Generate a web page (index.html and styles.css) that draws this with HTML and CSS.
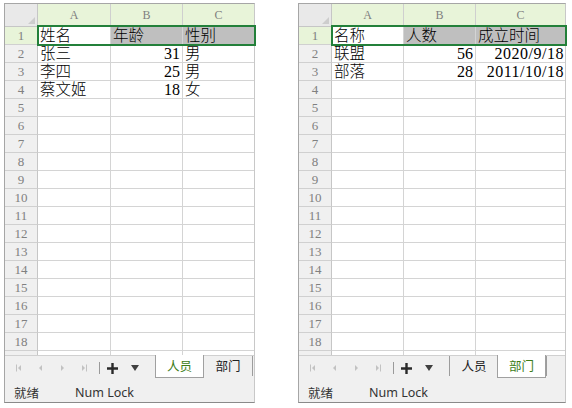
FILE: index.html
```html
<!DOCTYPE html>
<html>
<head>
<meta charset="utf-8">
<link rel="stylesheet" href="styles.css">
</head>
<body>
<div class="desk">
  <div class="win win-l">
    <div class="grid grid-l">
      <div class="corner"><span class="tri"></span></div><div class="ch hl">A</div><div class="ch hl">B</div><div class="ch hl last">C</div>
      <div class="rh hl">1</div><div class="c">姓名</div><div class="c sel">年龄</div><div class="c sel last">性别</div>
      <div class="rh">2</div><div class="c">张三</div><div class="c num">31</div><div class="c last">男</div>
      <div class="rh">3</div><div class="c">李四</div><div class="c num">25</div><div class="c last">男</div>
      <div class="rh">4</div><div class="c">蔡文姬</div><div class="c num">18</div><div class="c last">女</div>
      <div class="rh">5</div><div class="c"></div><div class="c"></div><div class="c last"></div>
      <div class="rh">6</div><div class="c"></div><div class="c"></div><div class="c last"></div>
      <div class="rh">7</div><div class="c"></div><div class="c"></div><div class="c last"></div>
      <div class="rh">8</div><div class="c"></div><div class="c"></div><div class="c last"></div>
      <div class="rh">9</div><div class="c"></div><div class="c"></div><div class="c last"></div>
      <div class="rh">10</div><div class="c"></div><div class="c"></div><div class="c last"></div>
      <div class="rh">11</div><div class="c"></div><div class="c"></div><div class="c last"></div>
      <div class="rh">12</div><div class="c"></div><div class="c"></div><div class="c last"></div>
      <div class="rh">13</div><div class="c"></div><div class="c"></div><div class="c last"></div>
      <div class="rh">14</div><div class="c"></div><div class="c"></div><div class="c last"></div>
      <div class="rh">15</div><div class="c"></div><div class="c"></div><div class="c last"></div>
      <div class="rh">16</div><div class="c"></div><div class="c"></div><div class="c last"></div>
      <div class="rh">17</div><div class="c"></div><div class="c"></div><div class="c last"></div>
      <div class="rh">18</div><div class="c"></div><div class="c"></div><div class="c last"></div>
      <div class="rh fill"></div><div class="c fill"></div><div class="c fill"></div><div class="c fill last"></div>
      <div class="selbox selbox-l"></div>
    </div>
    <div class="tabbar">
      <div class="nav">
        <span class="nb"><svg width="5" height="8" viewBox="0 0 5 8"><rect x="0" y="0.5" width="1" height="7"/><path d="M5 1 L2 4 L5 7Z"/></svg></span>
        <span class="nb"><svg width="3" height="6" viewBox="0 0 3 6"><path d="M3 0 L0 3 L3 6Z"/></svg></span>
        <span class="nb"><svg width="3" height="6" viewBox="0 0 3 6"><path d="M0 0 L3 3 L0 6Z"/></svg></span>
        <span class="nb"><svg width="5" height="8" viewBox="0 0 5 8"><path d="M0 1 L3 4 L0 7Z"/><rect x="4" y="0.5" width="1" height="7"/></svg></span>
        <span class="nsep"></span>
        <span class="nplus"><svg width="11" height="11" viewBox="0 0 11 11"><path d="M5.5 0V11M0 5.5H11"/></svg></span>
        <span class="ndown"><svg width="8" height="6" viewBox="0 0 8 6"><path d="M0 0H8L4 6Z"/></svg></span>
      </div>
      <div class="tabs">
        <div class="tab on">人员</div>
        <div class="tab">部门</div>
      </div>
    </div>
    <div class="status"><span>就绪</span><span class="nl">Num Lock</span></div>
  </div>

  <div class="win win-r">
    <div class="grid grid-r">
      <div class="corner"><span class="tri"></span></div><div class="ch hl">A</div><div class="ch hl">B</div><div class="ch hl last">C</div>
      <div class="rh hl">1</div><div class="c">名称</div><div class="c sel">人数</div><div class="c sel last">成立时间</div>
      <div class="rh">2</div><div class="c">联盟</div><div class="c num">56</div><div class="c num date last">2020/9/18</div>
      <div class="rh">3</div><div class="c">部落</div><div class="c num">28</div><div class="c num date last">2011/10/18</div>
      <div class="rh">4</div><div class="c"></div><div class="c"></div><div class="c last"></div>
      <div class="rh">5</div><div class="c"></div><div class="c"></div><div class="c last"></div>
      <div class="rh">6</div><div class="c"></div><div class="c"></div><div class="c last"></div>
      <div class="rh">7</div><div class="c"></div><div class="c"></div><div class="c last"></div>
      <div class="rh">8</div><div class="c"></div><div class="c"></div><div class="c last"></div>
      <div class="rh">9</div><div class="c"></div><div class="c"></div><div class="c last"></div>
      <div class="rh">10</div><div class="c"></div><div class="c"></div><div class="c last"></div>
      <div class="rh">11</div><div class="c"></div><div class="c"></div><div class="c last"></div>
      <div class="rh">12</div><div class="c"></div><div class="c"></div><div class="c last"></div>
      <div class="rh">13</div><div class="c"></div><div class="c"></div><div class="c last"></div>
      <div class="rh">14</div><div class="c"></div><div class="c"></div><div class="c last"></div>
      <div class="rh">15</div><div class="c"></div><div class="c"></div><div class="c last"></div>
      <div class="rh">16</div><div class="c"></div><div class="c"></div><div class="c last"></div>
      <div class="rh">17</div><div class="c"></div><div class="c"></div><div class="c last"></div>
      <div class="rh">18</div><div class="c"></div><div class="c"></div><div class="c last"></div>
      <div class="rh fill"></div><div class="c fill"></div><div class="c fill"></div><div class="c fill last"></div>
      <div class="selbox selbox-r"></div>
    </div>
    <div class="tabbar">
      <div class="nav">
        <span class="nb"><svg width="5" height="8" viewBox="0 0 5 8"><rect x="0" y="0.5" width="1" height="7"/><path d="M5 1 L2 4 L5 7Z"/></svg></span>
        <span class="nb"><svg width="3" height="6" viewBox="0 0 3 6"><path d="M3 0 L0 3 L3 6Z"/></svg></span>
        <span class="nb"><svg width="3" height="6" viewBox="0 0 3 6"><path d="M0 0 L3 3 L0 6Z"/></svg></span>
        <span class="nb"><svg width="5" height="8" viewBox="0 0 5 8"><path d="M0 1 L3 4 L0 7Z"/><rect x="4" y="0.5" width="1" height="7"/></svg></span>
        <span class="nsep"></span>
        <span class="nplus"><svg width="11" height="11" viewBox="0 0 11 11"><path d="M5.5 0V11M0 5.5H11"/></svg></span>
        <span class="ndown"><svg width="8" height="6" viewBox="0 0 8 6"><path d="M0 0H8L4 6Z"/></svg></span>
      </div>
      <div class="tabs">
        <div class="tab">人员</div>
        <div class="tab on">部门</div>
      </div>
    </div>
    <div class="status"><span>就绪</span><span class="nl">Num Lock</span></div>
  </div>
</div>
</body>
</html>
```

FILE: styles.css
```css
* { box-sizing: border-box; margin: 0; padding: 0; }
html, body { background: #fff; }
body { margin: 0; }

.desk {
  display: flex;
  align-items: flex-start;
  gap: 43px;
  padding: 3px 0 0 4px;
}

.win {
  display: flex;
  flex-direction: column;
  height: 400px;
  border: 1px solid #a6a6a6;
  border-right-color: #c8c8c8;
  border-bottom-color: #8a8a8a;
  background: #fff;
}
.win-l { width: 251px; }
.win-r { width: 268px; }

.grid {
  position: relative;
  display: grid;
  grid-template-rows: 23px repeat(18, 18px) 4px;
}
.grid-l { grid-template-columns: 33px 73px 72px 71px; }
.grid-r { grid-template-columns: 33px 72px 72px 89px; }

.corner {
  display: flex;
  justify-content: flex-end;
  align-items: flex-end;
  padding: 0 2px 2px 0;
  background: #e9e9e9;
  border-right: 1px solid #c6c6c6;
  border-bottom: 1px solid #c6c6c6;
}
.tri {
  width: 7px;
  height: 7px;
  background: #cdcdcd;
  clip-path: polygon(100% 0, 100% 100%, 0 100%);
}

.ch {
  background: #f0f0f0;
  border-right: 1px solid #cfcfcf;
  border-bottom: 1px solid #c6c6c6;
  font: 12px/22px "Liberation Serif", serif;
  color: #7f7f7f;
  text-align: center;
}

.rh {
  background: #f0f0f0;
  border-right: 1px solid #c6c6c6;
  border-bottom: 1px solid #d0d0d0;
  font: 13px/17px "Liberation Serif", serif;
  color: #808080;
  text-align: center;
}

.hl { background: #e8f4d9; }

.c {
  border-right: 1px solid #d4d4d4;
  border-bottom: 1px solid #d4d4d4;
  padding: 0 2px;
  font: 300 15.5px/17px "Liberation Serif", "Noto Sans CJK SC", serif;
  color: #000;
  white-space: nowrap;
  overflow: hidden;
}
.last { border-right: none; }
.num { text-align: right; font-weight: 400; font-size: 16px; }
.date { letter-spacing: 0.5px; padding-right: 1px; }
.sel { background: #bfbfbf; }
.fill { border-bottom: none; }

.selbox {
  position: absolute;
  top: 21px;
  left: 32px;
  height: 21px;
  border: 2px solid #23803a;
  pointer-events: none;
}
.selbox-l { width: 219px; }
.selbox-r { width: 236px; }

.tabbar {
  display: flex;
  height: 25px;
  background: #f0f0f0;
  border-top: 1px solid #d0d0d0;
}

.nav {
  display: flex;
  align-items: center;
  padding-left: 2px;
}
.nb {
  width: 22px;
  display: flex;
  justify-content: center;
  align-items: center;
}
.nb svg { fill: #c2c2c2; display: block; }
.nsep {
  width: 1px;
  height: 12px;
  margin-left: 4px;
  background: #9a9a9a;
}
.nplus {
  width: 25px;
  display: flex;
  justify-content: center;
  align-items: center;
}
.nplus svg { stroke: #2a2a2a; stroke-width: 2.4; display: block; }
.ndown {
  width: 19px;
  display: flex;
  justify-content: center;
  align-items: center;
}
.ndown svg { fill: #404040; display: block; }

.tabs {
  display: flex;
  align-items: flex-start;
  align-self: flex-start;
  height: 20px;
  margin-left: 11px;
  border-left: 1px solid #9c9c9c;
  border-right: 1px solid #9c9c9c;
}
.tab {
  width: 48px;
  height: 20px;
  font: 12.5px/20px "Noto Sans CJK SC", sans-serif;
  color: #222;
  text-align: center;
}
.tab.on {
  width: 49px;
  height: 23px;
  margin-top: -1px;
  margin-left: -1px;
  background: #fff;
  border: 1px solid #a0a0a0;
  border-top: none;
  color: #3d7c17;
  line-height: 21px;
}

.status {
  flex: 1;
  display: flex;
  align-items: center;
  padding: 2px 0 0 9px;
  background: #f0f0f0;
  font: 12.5px "Noto Sans", "Noto Sans CJK SC", sans-serif;
  color: #333;
}
.nl { margin-left: 36px; }
```
